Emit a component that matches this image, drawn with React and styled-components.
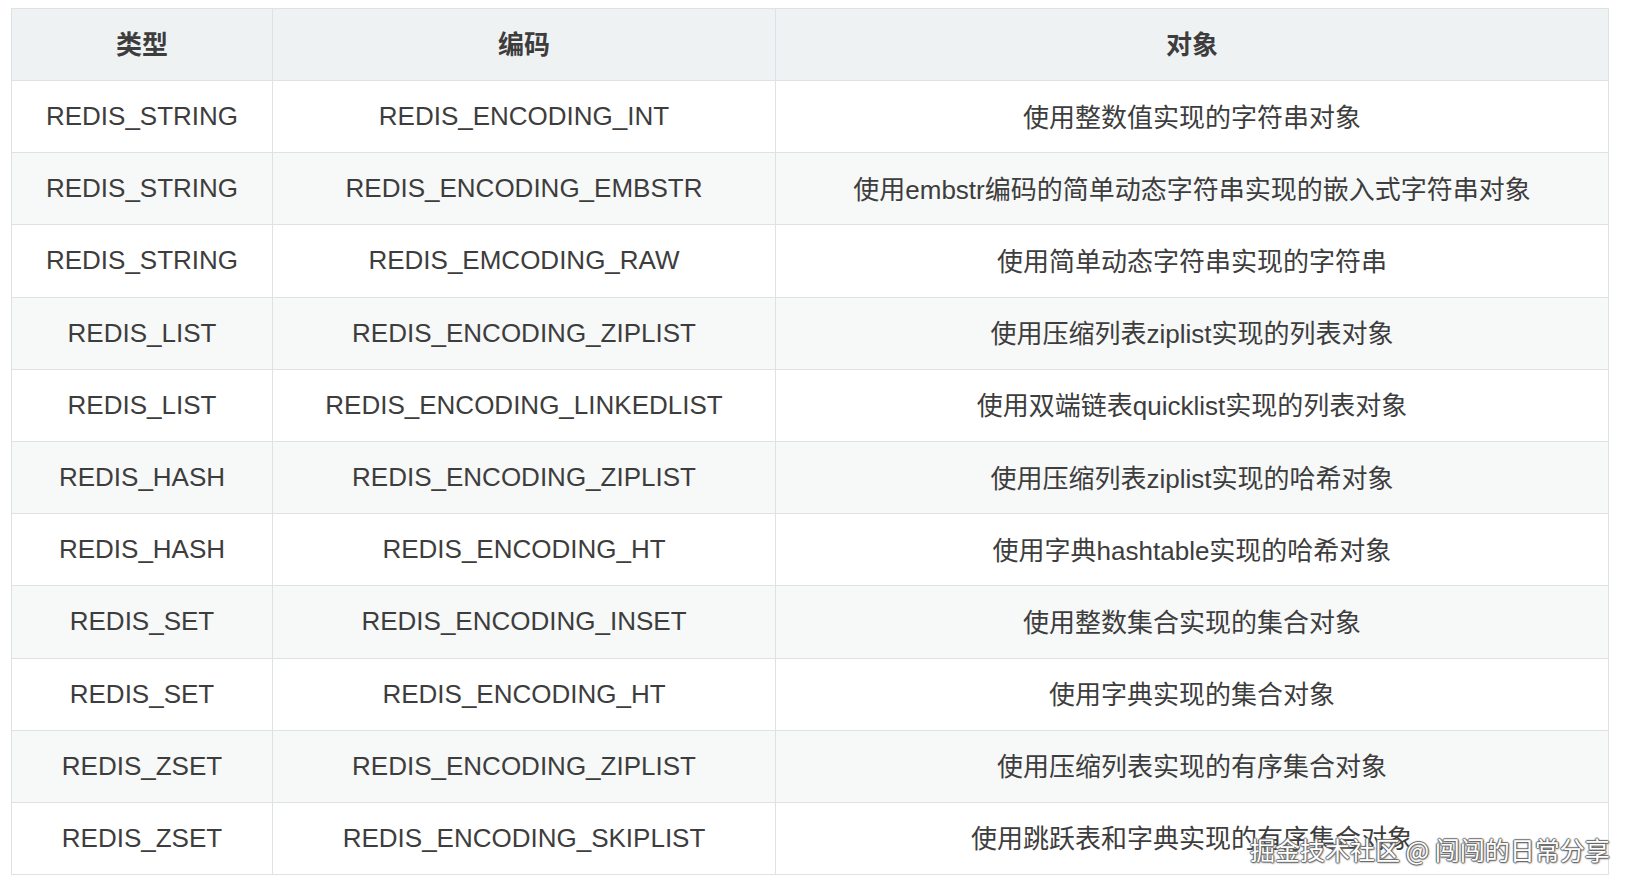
import React from "react";
import styled, { createGlobalStyle } from "styled-components";

const GlobalStyle = createGlobalStyle`
  html, body {
    margin: 0;
    padding: 0;
    background: #fff;
  }
  body {
    font-family: "Liberation Sans", Arial, "Noto Sans CJK SC", sans-serif;
    color: #3d3d3d;
  }
`;

const Page = styled.div`
  position: relative;
  width: 1635px;
  height: 890px;
  padding: 8px 0 0 11px;
  box-sizing: border-box;
`;

const Table = styled.table`
  width: 1598px;
  table-layout: fixed;
  border-collapse: collapse;
  border: 1px solid #dfe2e5;
  font-size: 26px;
`;

const HeadRow = styled.tr`
  height: 72px;
`;

const Th = styled.th`
  padding: 0 0 4px;
  background: #eff2f3;
  border: 1px solid #dfe2e5;
  font-weight: bold;
  text-align: center;
  color: #3d3d3d;
`;

const Row = styled.tr`
  height: 72.2px;
  background: ${(p) => (p.$striped ? "#f7f8f8" : "#fff")};
`;

const Td = styled.td`
  padding: 0 0 ${(p) => (p.$cjk ? "3px" : "0")};
  border: 1px solid #dfe2e5;
  text-align: center;
  white-space: nowrap;
`;

const Watermark = styled.div`
  position: absolute;
  left: 1250px;
  top: 832px;
  font-family: "Noto Sans CJK SC", "Liberation Sans", sans-serif;
  font-size: 25px;
  line-height: 34px;
  color: #fff;
  white-space: nowrap;
  text-shadow: 1px 0 1px #666, -1px 0 1px #666, 0 1px 1px #666, 0 -1px 1px #666,
    1px 1px 2px #888;
`;

const rows = [
  ["REDIS_STRING", "REDIS_ENCODING_INT", "使用整数值实现的字符串对象"],
  ["REDIS_STRING", "REDIS_ENCODING_EMBSTR", "使用embstr编码的简单动态字符串实现的嵌入式字符串对象"],
  ["REDIS_STRING", "REDIS_EMCODING_RAW", "使用简单动态字符串实现的字符串"],
  ["REDIS_LIST", "REDIS_ENCODING_ZIPLIST", "使用压缩列表ziplist实现的列表对象"],
  ["REDIS_LIST", "REDIS_ENCODING_LINKEDLIST", "使用双端链表quicklist实现的列表对象"],
  ["REDIS_HASH", "REDIS_ENCODING_ZIPLIST", "使用压缩列表ziplist实现的哈希对象"],
  ["REDIS_HASH", "REDIS_ENCODING_HT", "使用字典hashtable实现的哈希对象"],
  ["REDIS_SET", "REDIS_ENCODING_INSET", "使用整数集合实现的集合对象"],
  ["REDIS_SET", "REDIS_ENCODING_HT", "使用字典实现的集合对象"],
  ["REDIS_ZSET", "REDIS_ENCODING_ZIPLIST", "使用压缩列表实现的有序集合对象"],
  ["REDIS_ZSET", "REDIS_ENCODING_SKIPLIST", "使用跳跃表和字典实现的有序集合对象"],
];

const App = () => {
  return (
    <Page>
      <GlobalStyle />
      <Table>
        <colgroup>
          <col style={{ width: 261 }} />
          <col style={{ width: 503 }} />
          <col />
        </colgroup>
        <thead>
          <HeadRow>
            <Th>类型</Th>
            <Th>编码</Th>
            <Th>对象</Th>
          </HeadRow>
        </thead>
        <tbody>
          {rows.map((r, i) => (
            <Row key={i} $striped={i % 2 === 1}>
              <Td>{r[0]}</Td>
              <Td>{r[1]}</Td>
              <Td $cjk>{r[2]}</Td>
            </Row>
          ))}
        </tbody>
      </Table>
      <Watermark>掘金技术社区 @ 闯闯的日常分享</Watermark>
    </Page>
  );
};

export default App;
